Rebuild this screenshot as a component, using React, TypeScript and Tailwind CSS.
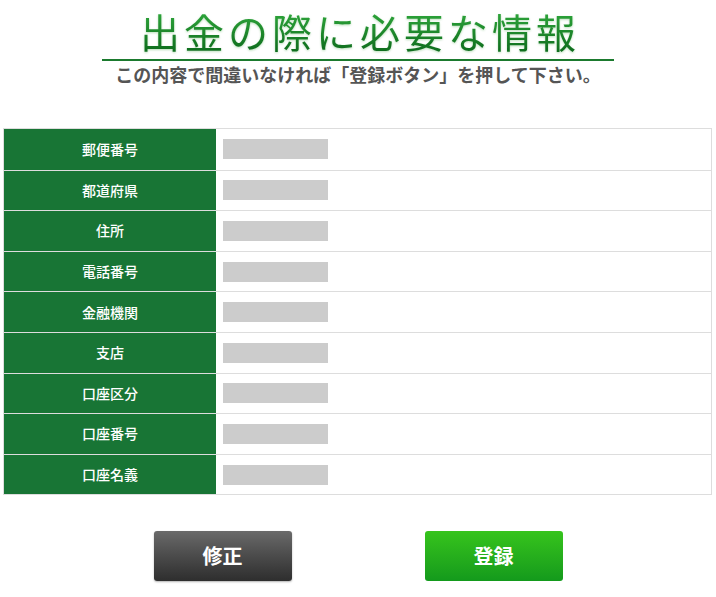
const rows = ['郵便番号', '都道府県', '住所', '電話番号', '金融機関', '支店', '口座区分', '口座番号', '口座名義'];

const font = { fontFamily: '"Noto Sans CJK JP", "Noto Sans", sans-serif' };

export default function App() {
  return (
    <div className="w-[716px] h-[597px] bg-white" style={font}>
      <div className="flex flex-col items-center pt-[5px]">
        <h1 className="text-[40px] leading-[52px] font-normal tracking-[4px] pl-[4px] bg-gradient-to-b from-[#33b040] to-[#0a661a] bg-clip-text text-transparent [filter:drop-shadow(0_1px_1px_rgba(60,160,60,0.35))]">
          出金の際に必要な情報
        </h1>
        <div className="w-[512px] h-[2px] bg-[#1b7a2e] mt-[2px]" />
        <p className="text-[18px] leading-[24px] font-bold text-[#555] mt-[1px]">
          この内容で間違いなければ「登録ボタン」を押して下さい。
        </p>
      </div>

      <div className="mt-[42px] mx-[3px] w-[709px] border border-[#ddd]">
        {rows.map((label, i) => (
          <div key={label} className={`flex h-[40.6px] ${i > 0 ? 'border-t border-[#ddd]' : ''}`}>
            <div className="w-[212px] shrink-0 bg-[#187535] text-white text-[14px] font-medium flex items-center justify-center">
              {label}
            </div>
            <div className="flex-1 flex items-center pl-[7px]">
              <div className="w-[105px] h-[20px] bg-[#cccccc]" />
            </div>
          </div>
        ))}
      </div>

      <div className="flex justify-center gap-[133px] mt-[36px]">
        <button className="w-[138px] h-[50px] rounded-[3px] bg-gradient-to-b from-[#6a6a6a] to-[#2e2e2e] text-white text-[20px] font-bold shadow-[0_1px_2px_rgba(0,0,0,0.3)]">
          修正
        </button>
        <button className="w-[138px] h-[50px] rounded-[3px] bg-gradient-to-b from-[#36c41c] to-[#139a1c] text-white text-[20px] font-bold">
          登録
        </button>
      </div>
    </div>
  );
}
